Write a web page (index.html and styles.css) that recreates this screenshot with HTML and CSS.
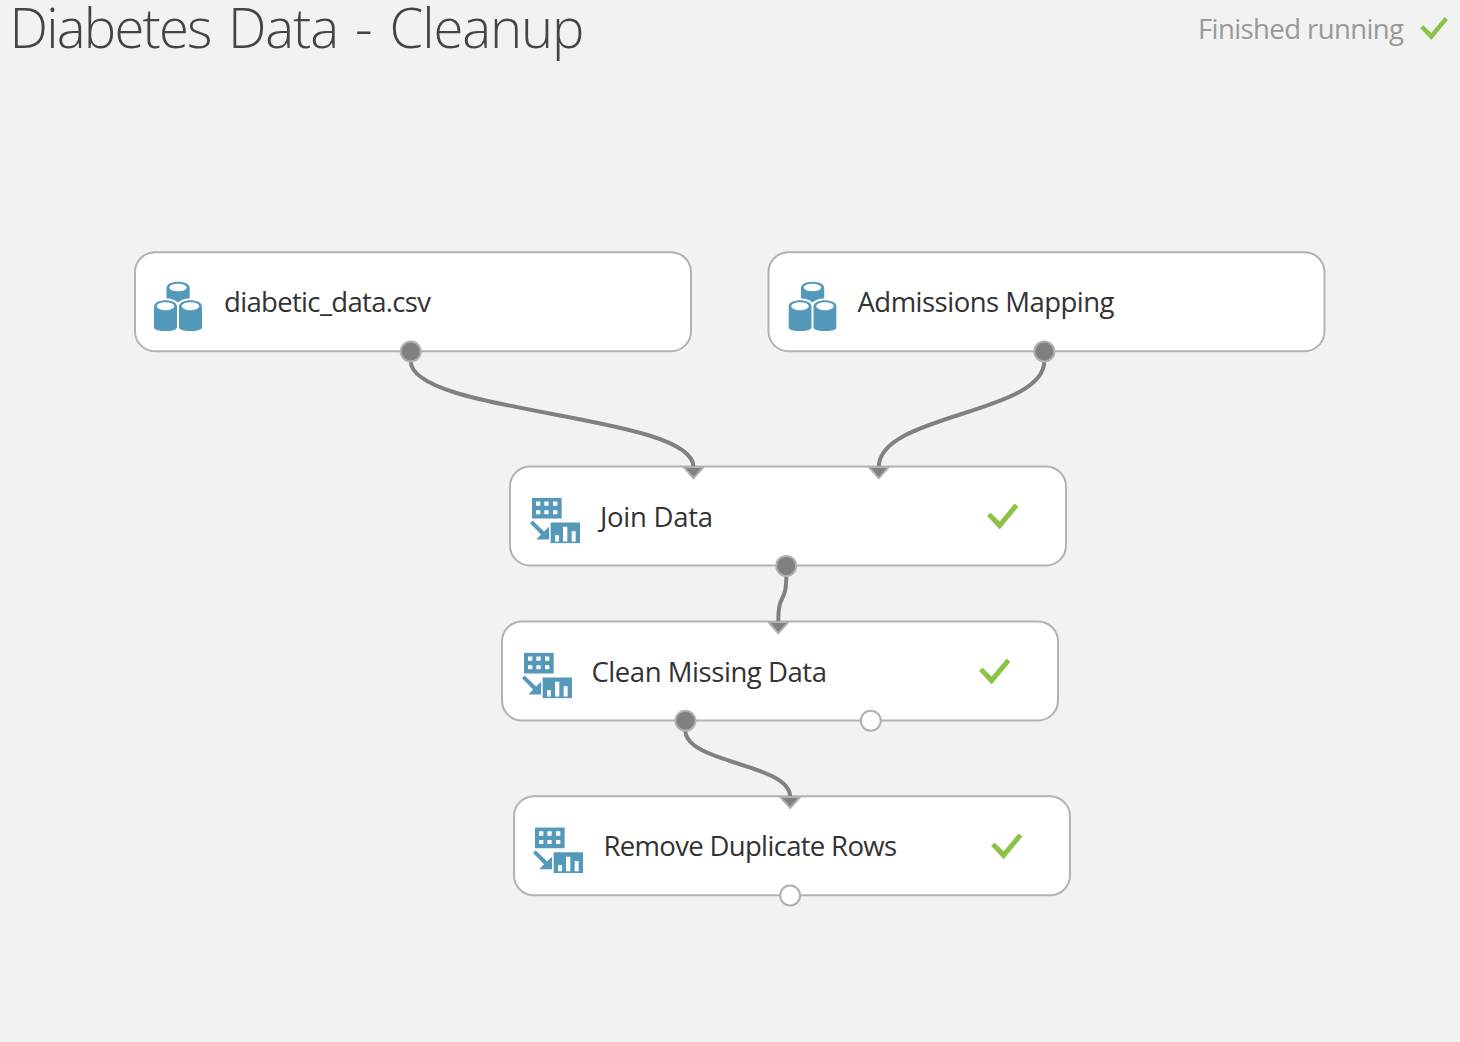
FILE: index.html
```html
<!DOCTYPE html>
<html lang="en">
<head>
<meta charset="utf-8">
<title>Diabetes Data - Cleanup</title>
<link rel="stylesheet" href="styles.css">
</head>
<body>
<svg class="defs" aria-hidden="true">
  <symbol id="dataset" viewBox="0 0 48 50">
    <path class="blue" d="M12.5 6.5C12.5 -1.6 35.7 -1.6 35.7 6.5V21H12.5Z"/>
    <ellipse class="white" cx="24" cy="6.3" rx="8.7" ry="3.8"/>
    <path class="blue gap" d="M0 25.5C0 17 23 17 23 25.5V46C23 51.2 0 51.2 0 46Z"/>
    <path class="blue gap" d="M25 25.5C25 17 48 17 48 25.5V46C48 51.2 25 51.2 25 46Z"/>
    <path class="blue" d="M0 25.5C0 17 23 17 23 25.5V46C23 51.2 0 51.2 0 46Z"/>
    <path class="blue" d="M25 25.5C25 17 48 17 48 25.5V46C48 51.2 25 51.2 25 46Z"/>
    <ellipse class="white" cx="11.5" cy="25" rx="8.7" ry="4"/>
    <ellipse class="white" cx="36.5" cy="25" rx="8.7" ry="4"/>
  </symbol>
  <symbol id="module" viewBox="0 0 150 138">
    <path class="blue" d="M6 0H95V63H6Z"/>
    <path class="white" d="M18 12h13v13H18ZM43 12h13v13H43ZM69 12h13v13H69ZM18 38h13v12H18ZM43 38h13v12H43ZM69 38h13v12H69Z"/>
    <path class="blue" d="M8 69L42 102L57 88V126H19L33 111L0 77Z"/>
    <path class="blue" d="M62 75H150V138H62Z"/>
    <path class="white" d="M75 113h12v19H75ZM99 88h13v44H99ZM125 101h12v31H125Z"/>
  </symbol>
  <symbol id="check" viewBox="0 0 94 78">
    <path class="green" d="M0 37L11 28L38 54L83 0L94 10L38 78Z"/>
  </symbol>
</svg>

<header class="header">
  <h1 class="title"><svg class="title-text" width="600" height="80"><text y="48"><tspan x="9.500" textLength="203">Diabetes</tspan> <tspan x="228" textLength="111">Data</tspan> <tspan x="355">-</tspan> <tspan x="389.500" textLength="195">Cleanup</tspan></text></svg></h1>
  <div class="status">
    <svg class="status-text" width="210" height="50"><text x="2" y="38.500" textLength="206">Finished running</text></svg>
    <svg class="status-check"><use href="#check"/></svg>
  </div>
</header>

<main class="canvas">
  <section class="node node-diabetic">
    <svg class="icon-dataset"><use href="#dataset"/></svg>
    <svg class="label"><text x="2" y="61" textLength="207">diabetic_data.csv</text></svg>
  </section>
  <section class="node node-admissions">
    <svg class="icon-dataset"><use href="#dataset"/></svg>
    <svg class="label"><text x="2" y="61" textLength="257">Admissions Mapping</text></svg>
  </section>
  <section class="node node-join">
    <svg class="icon-module"><use href="#module"/></svg>
    <svg class="label"><text x="2" y="61" textLength="113">Join Data</text></svg>
    <svg class="node-check"><use href="#check"/></svg>
  </section>
  <section class="node node-clean">
    <svg class="icon-module"><use href="#module"/></svg>
    <svg class="label"><text x="1.500" y="61" textLength="235.500">Clean Missing Data</text></svg>
    <svg class="node-check"><use href="#check"/></svg>
  </section>
  <section class="node node-remove">
    <svg class="icon-module"><use href="#module"/></svg>
    <svg class="label"><text x="1.500" y="61" textLength="293.500">Remove Duplicate Rows</text></svg>
    <svg class="node-check"><use href="#check"/></svg>
  </section>

  <svg class="connections" width="1460" height="1042">
    <g class="wires">
      <path d="M410.700 361C410.700 414 693.500 414 693.500 467"/>
      <path d="M1044.300 361C1044.300 414 878.800 414 878.800 467"/>
      <path d="M786.300 575C786.300 606 778.300 590 778.300 622"/>
      <path d="M685.300 730C685.300 764 790.200 763 790.200 797"/>
    </g>
    <g class="port">
      <path d="M683.500 467H703.500L693.500 478.300Z"/>
      <path d="M868.800 467H888.800L878.800 478.300Z"/>
      <path d="M768.300 622H788.300L778.300 633.300Z"/>
      <path d="M780.200 797H800.200L790.200 808Z"/>
      <circle cx="410.700" cy="351.500" r="10"/>
      <circle cx="1044.300" cy="351.500" r="10"/>
      <circle cx="786.200" cy="565.900" r="10"/>
      <circle cx="685.400" cy="720.700" r="10"/>
    </g>
    <g class="port open">
      <circle cx="870.800" cy="720.700" r="10"/>
      <circle cx="790.100" cy="895.500" r="10"/>
    </g>
  </svg>
</main>
</body>
</html>
```
FILE: styles.css
```css
* {
  box-sizing: border-box;
}

body {
  margin: 0;
  width: 1460px;
  height: 1042px;
  overflow: hidden;
  position: relative;
  background: #f2f2f2;
  font-family: "Open Sans", "Noto Sans", sans-serif;
}

svg {
  display: block;
  flex: none;
}

text {
  fill: #333;
  font-size: 27.5px;
}

.defs {
  position: absolute;
  width: 0;
  height: 0;
}

.blue { fill: #5499ba; }
.white { fill: #fff; }
.green { fill: #8bc346; }

.gap {
  stroke: #fff;
  stroke-width: 4;
}

.header {
  display: flex;
  justify-content: space-between;
  height: 80px;
  padding-right: 12px;
}

.title {
  margin: 0;
  font-weight: 300;
}

.title-text {
  overflow: visible;
}

.title-text text {
  font-size: 54.5px;
  fill: #444;
}

.status {
  display: flex;
  gap: 14px;
}

.status-text text {
  fill: #999;
  font-size: 27.5px;
}

.status-check {
  width: 28px;
  height: 23px;
  margin-top: 16.500px;
}

.canvas {
  position: absolute;
  inset: 0;
}

.node {
  position: absolute;
  display: flex;
  width: 558px;
  height: 101px;
  border: 2px solid #b2b2b2;
  border-radius: 21px;
  background: #fff;
}

.node-diabetic { left: 134px; top: 251px; transform: translateY(0.2px); }
.node-admissions { left: 767px; top: 251px; transform: translate(0.5px, 0.2px); }
.node-join { left: 509px; top: 465px; transform: translateY(0.5px); }
.node-clean { left: 501px; top: 620px; transform: translateY(0.5px); }
.node-remove { left: 513px; top: 795px; transform: translateY(0.3px); }

.icon-dataset {
  width: 48px;
  height: 50px;
  margin: 28px 20px 0 18px;
}

.node-admissions .icon-dataset {
  margin: 28px 19.500px 0 18.500px;
}

.icon-module {
  width: 50px;
  height: 46px;
  margin: 29.500px 18px 0 19px;
}

.node-remove .icon-module {
  margin: 29.700px 19px 0 18px;
}

.label {
  width: 340px;
  height: 98px;
  margin-top: -2px;
  overflow: visible;
}

.node-check {
  width: 31.300px;
  height: 26px;
  margin: 35.500px 0 0 49px;
}

.connections {
  position: absolute;
  inset: 0;
}

.wires {
  fill: none;
  stroke: #808080;
  stroke-width: 4;
}

.port {
  fill: #808080;
  stroke: #b0b0b0;
  stroke-width: 2;
}

.open {
  fill: #fff;
}
```
